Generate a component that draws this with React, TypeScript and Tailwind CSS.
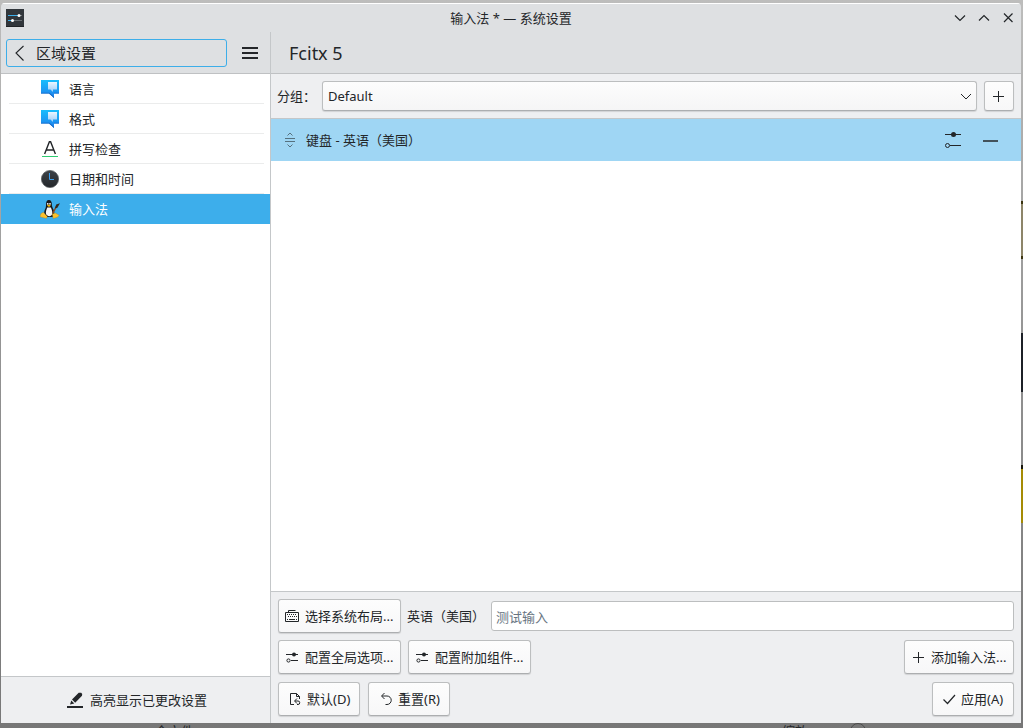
import type { ReactNode } from "react";

const btn =
  "flex h-[34px] items-center whitespace-nowrap rounded-[3px] border border-[#bcbebf] border-b-[#acaeb0] bg-linear-to-b from-[#fdfdfd] to-[#f7f7f8] text-[13px] shadow-[0_1px_1px_rgba(0,0,0,0.12)]";

function Svg({ size, children, className }: { size: number; children: ReactNode; className?: string }) {
  return (
    <svg width={size} height={size} viewBox={`0 0 ${size} ${size}`} fill="none" stroke="currentColor" className={`shrink-0 ${className ?? ""}`} aria-hidden="true">
      {children}
    </svg>
  );
}

const Label = ({ children }: { children: ReactNode }) => <span className="pt-[2px]">{children}</span>;

const Configure = () => (
  <Svg size={16}>
    <path d="M2 5.5h12M7 11.5h7" />
    <circle cx="10" cy="5.5" r="2" fill="currentColor" stroke="none" />
    <circle cx="4.5" cy="11.5" r="1.6" />
  </Svg>
);

const Plus = () => (
  <Svg size={16}>
    <path d="M7.5 2v11M2 7.5h11" />
  </Svg>
);

const Bubble = () => (
  <Svg size={18}>
    <defs>
      <linearGradient id="bubbleBack" x1="0" y1="0" x2="0" y2="1">
        <stop stopColor="#19bdfc" />
        <stop offset="1" stopColor="#1e80ee" />
      </linearGradient>
      <linearGradient id="bubbleFront" x1="0" y1="0" x2="0" y2="1">
        <stop stopColor="#eaf5ff" />
        <stop offset="1" stopColor="#9dcdf8" />
      </linearGradient>
    </defs>
    <path d="M0 0h18v13.500h-5V18l-5-4.500H0z" fill="url(#bubbleBack)" stroke="none" />
    <path d="M0 12.700h8.500l4.500 4V18l-5-4.500H0zM13 12.700h5v.8h-5z" fill="#1769c4" stroke="none" />
    <path d="M7 2h9v7.500h-4V12L9.500 9.500H7z" fill="url(#bubbleFront)" stroke="none" />
  </Svg>
);

const Spell = () => (
  <Svg size={18}>
    <path d="M3.6 14L8.4 1.7h1.2L14.4 14M5.3 10h7.4" stroke="#232629" strokeWidth="1.4" />
    <path d="M1 16.5h16" stroke="#2ecc71" />
  </Svg>
);

const Clock = () => (
  <Svg size={18}>
    <defs>
      <linearGradient id="clockFace" x1="0" y1="0" x2="0" y2="1">
        <stop stopColor="#3d4247" />
        <stop offset="1" stopColor="#24272b" />
      </linearGradient>
    </defs>
    <circle cx="9" cy="9" r="8.6" fill="url(#clockFace)" stroke="#55595c" strokeWidth=".7" />
    <path d="M8.5 3v6.5H13" stroke="#3a9ff0" />
  </Svg>
);

const Tux = () => (
  <Svg size={20}>
    <path d="M4.2 14C4 11 6 9.7 6 6.8 5.7 3 6.800 1 8.900 1s3.200 2 3 5.200c.3 3 2.700 4.500 2.400 8.500L12.700 18H5.400z" fill="#17191c" stroke="none" />
    <path d="M6 15c-.4-2.5.4-4 1.2-6.6h3.6c1 2.2 1.8 4 1.5 6.8-1.4 2.600-4.800 2.600-6.300-.2z" fill="#f4f4f4" stroke="none" />
    <circle cx="7.7" cy="4.8" r=".9" fill="#fff" stroke="none" />
    <circle cx="10" cy="4.8" r=".9" fill="#fff" stroke="none" />
    <path d="M6.9 6.500l2-1 2 1-1.900 1.400z" fill="#f5b400" stroke="none" />
    <path d="M0 17.800l.8-3.100 2.500-1.500 4 4.200-.9 2zM12.200 15l3-1 4 2.200-1.700 2-4.300 1.300z" fill="#fbc02d" stroke="#a97908" strokeWidth=".3" />
    <path d="M13 14l3.300-6.500" stroke="#8a4b22" strokeWidth="1.5" />
    <path d="M14.900 9.200l1.300-3.700 3.800-1.200-2.800 4.700z" fill="#33291f" stroke="none" />
  </Svg>
);

const categories = [
  { label: "语言", icon: <Bubble /> },
  { label: "格式", icon: <Bubble /> },
  { label: "拼写检查", icon: <Spell /> },
  { label: "日期和时间", icon: <Clock /> },
  { label: "输入法", icon: <Tux /> },
];

function TitleBar() {
  return (
    <header className="grid h-[29px] shrink-0 grid-cols-[1fr_auto_1fr] items-center border-t border-white bg-[#dee0e2] px-[5px]">
      <svg width="18" height="18" viewBox="0 0 18 18" aria-hidden="true">
        <path d="M0 0h18v18H0z" fill="#31363b" />
        <path d="M0 17h18v1H0z" fill="#202326" />
        <path d="M2 6.5h11" stroke="#3daee9" />
        <path d="M13 6.5h3M8 11.5h8" stroke="#6a7074" />
        <path d="M2 11.5h4" stroke="#3daee9" />
        <circle cx="13" cy="6.5" r="1.5" fill="#fff" />
        <circle cx="6.5" cy="11.5" r="1.5" fill="#fff" />
      </svg>
      <h1 className="text-[13px] leading-5">输入法 * — 系统设置</h1>
      <div className="flex justify-end gap-2">
        <button aria-label="最小化"><Svg size={16}><path d="M3 5.5l5 5 5-5" strokeWidth="1.2" /></Svg></button>
        <button aria-label="最大化"><Svg size={16}><path d="M3 10.5l5-5 5 5" strokeWidth="1.2" /></Svg></button>
        <button aria-label="关闭"><Svg size={16}><path d="M4 3.500l8.500 8.500M12.500 3.500L4 12" strokeWidth="1.2" /></Svg></button>
      </div>
    </header>
  );
}

function Sidebar() {
  return (
    <aside className="flex w-[270px] shrink-0 flex-col border-r border-[#c4c7c9] bg-white">
      <div className="flex h-[42px] shrink-0 items-center border-b border-[#bfc1c3] bg-[#dee0e2] pr-3 pl-[5px]">
        <button className="flex h-7 flex-1 items-center gap-[7px] rounded-[3px] border border-[#3daee9] pl-1 text-[15px]">
          <Svg size={18}><path d="M12.500 2L5 9l7.500 7.500" strokeWidth="1.1" /></Svg>
          <Label>区域设置</Label>
        </button>
        <button aria-label="菜单" className="ml-[15px]">
          <Svg size={16}><path d="M0 3h16M0 8h16M0 13h16" strokeWidth="2" /></Svg>
        </button>
      </div>
      <nav className="flex-1">
        <ul>
          {categories.map((c, i) => (
            <li key={c.label} className={i === 4 ? "bg-[#3daeeb] text-white" : ""}>
              <a href="#" className="block pr-[6px] pl-2">
                <span className={`flex h-[30px] items-center gap-[9px] border-b pl-[31px] text-[13px] ${i === 4 ? "border-transparent" : "border-[#ebecec]"}`}>
                  <span className="flex w-5 justify-center">{c.icon}</span>
                  <Label>{c.label}</Label>
                </span>
              </a>
            </li>
          ))}
        </ul>
      </nav>
      <div className="flex h-[47px] shrink-0 items-center justify-center border-t border-[#c4c7c9] bg-[#eeeff1] pl-[3px]">
        <button className="flex items-center gap-[7px] text-[13px]">
          <Svg size={16}>
            <path d="M0 14h16v2H0z" fill="currentColor" stroke="none" />
            <path d="M3 12.500l1.300-4 3 3zM5 7.500L11.700.7h2.500l1 1.200-.2 1.800-6.800 7z" fill="currentColor" stroke="none" />
          </Svg>
          <Label>高亮显示已更改设置</Label>
        </button>
      </div>
    </aside>
  );
}

function InputMethods() {
  return (
    <main className="flex min-w-0 flex-1 flex-col bg-[#eeeff1]">
      <div className="flex h-[42px] shrink-0 items-center border-b border-[#bfc1c3] bg-[#dee0e2] px-[18px] text-[18px]">
        <h2 className="pt-[2px]">Fcitx 5</h2>
      </div>
      <div className="flex h-[45px] shrink-0 items-center border-b border-[#c4c7c9] pr-[7px] pl-[6px]">
        <label htmlFor="group" className="w-[45px] pt-[2px] text-[13px] whitespace-nowrap">分组：</label>
        <div className="relative flex-1">
          <select id="group" className="h-[30px] w-full appearance-none rounded-[3px] border border-[#bcbebf] border-b-[#acaeb0] bg-linear-to-b from-[#fdfdfd] to-[#f5f5f6] px-[5px] pt-[2px] text-[13px] shadow-[0_1px_1px_rgba(0,0,0,0.12)]">
            <option>Default</option>
          </select>
          <Svg size={16} className="pointer-events-none absolute top-[7px] right-[3px]"><path d="M3 6l5 5 5-5" /></Svg>
        </div>
        <button aria-label="添加分组" className={`${btn} ml-[7px] h-[30px]! w-[30px] justify-center`}><Svg size={16}><path d="M7.500 3v11M2 8.500h11" /></Svg></button>
      </div>
      <ul className="flex-1 bg-white">
        <li className="flex h-[42px] items-center bg-[#9fd6f4] pr-[22px] pl-[11px] text-[13px]">
          <Svg size={16} className="text-[#56717f]">
            <path d="M5.5 3.5L8 1l2.5 2.5M3 6.5h10M3 9.5h10M5.5 12.5L8 15l2.5-2.5" />
          </Svg>
          <span className="ml-2 flex-1 pt-[2px]">键盘 - 英语（美国）</span>
          <button aria-label="配置" className="mr-[21px]">
            <Svg size={18}>
              <path d="M1 3.5h16M6 14.5h11" />
              <circle cx="9.5" cy="3.5" r="2.5" fill="currentColor" stroke="none" />
              <circle cx="3.5" cy="14.5" r="2" />
            </Svg>
          </button>
          <button aria-label="移除"><Svg size={16}><path d="M0 9h15" strokeWidth="1.3" /></Svg></button>
        </li>
      </ul>
      <footer className="flex shrink-0 flex-col gap-[7px] border-t border-[#c4c7c9] px-[7px] py-[7px]">
        <div className="flex items-center">
          <button className={`${btn} w-[123px] gap-[5px] pl-[5px]`}>
            <Svg size={16}>
              <path d="M1.500 4.500h13v9h-13zM4.500 4.500v-2h7" />
              <path d="M3 6.500h10M4 8.500h9" strokeDasharray="1 1" />
              <path d="M3 11.500h1M5 11.500h6M12 11.500h1" />
            </Svg>
            <Label>选择系统布局...</Label>
          </button>
          <label htmlFor="test" className="ml-[6px] w-[84px] pt-[2px] text-[13px] whitespace-nowrap">英语（美国）</label>
          <input id="test" placeholder="测试输入" className="h-[30px] min-w-0 flex-1 rounded-[3px] border border-[#bcbebf] bg-white px-1 pt-[2px] text-[13px] placeholder:text-[#677481]" />
        </div>
        <div className="flex gap-[7px]">
          <button className={`${btn} w-[123px] gap-[5px] pl-[5px]`}><Configure /><Label>配置全局选项...</Label></button>
          <button className={`${btn} w-[123px] gap-[5px] pl-[5px]`}><Configure /><Label>配置附加组件...</Label></button>
          <button className={`${btn} ml-auto w-[110px] gap-[5px] pl-[5px]`}><Svg size={16}><path d="M8.500 3v11M3 8.500h11" /></Svg><Label>添加输入法...</Label></button>
        </div>
        <div className="flex gap-2 pt-px">
          <button className={`${btn} w-[82px] gap-[4px] pl-2`}>
            <Svg size={16}>
              <path d="M7 13.500H3.500v-11h6l3 3V8M9.500 2.500v3h3" />
              <path d="M10 7.500l-2.500 2.500L10 12.500M8 10h3a1.700 1.700 0 0 1 0 3.500h-1" />
            </Svg>
            <Label>默认(D)</Label>
          </button>
          <button className={`${btn} w-[82px] gap-[4px] pl-[9px]`}>
            <Svg size={16}><path d="M6.500 2L3.500 5l3 3M4 5h5a4.200 4.200 0 0 1 0 8.500H7.500" /></Svg>
            <Label>重置(R)</Label>
          </button>
          <button className={`${btn} ml-auto w-[82px] gap-[4px] pl-2`}>
            <Svg size={16}><path d="M2.500 8.500l4 4 7.500-8.500" strokeWidth="1.2" /></Svg>
            <Label>应用(A)</Label>
          </button>
        </div>
      </footer>
    </main>
  );
}

export default function App() {
  return (
    <div className="relative flex h-screen flex-col overflow-hidden bg-[#8b8b8b] bg-linear-to-b from-[#bdbdbc] via-[#929292] to-[#777777] pt-[3px] pr-[2px] pb-[5px] pl-px font-['Noto_Sans','Noto_Sans_CJK_SC',sans-serif] text-[#232629]">
      <div className="absolute inset-y-0 right-0 w-[2px]" aria-hidden="true">
        <div className="mt-[201px] h-[58px] border-y-3 border-[#3c3510] bg-[#8d8569]" />
        <div className="mt-[74px] h-[59px] bg-[#1c2026]" />
        <div className="mt-[73px] h-[58px] border-t-4 border-[#17150c] bg-[#a58b04]" />
      </div>
      <div className="absolute inset-x-0 bottom-0 flex h-[5px] items-start overflow-hidden pl-[155px] text-[13px] leading-4" aria-hidden="true">
        <span>个文件</span>
        <span className="ml-[588px]">缩放</span>
        <span className="ml-[42px] h-4 w-4 rounded-full border border-[#4c4c4c]" />
      </div>
      <div className="relative flex min-h-0 flex-1 flex-col overflow-hidden rounded-t-[4px]">
        <TitleBar />
        <div className="flex min-h-0 flex-1">
          <Sidebar />
          <InputMethods />
        </div>
      </div>
    </div>
  );
}
